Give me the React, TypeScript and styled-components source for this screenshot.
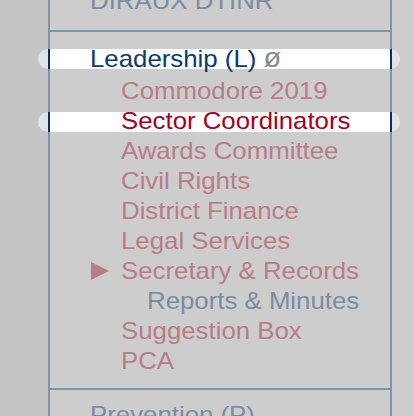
import styled, { createGlobalStyle } from "styled-components";

const GlobalStyle = createGlobalStyle`
    html, body {
        margin: 0;
        padding: 0;
        height: 100%;
        overflow: hidden;
        background: #cdcdcd;
    }
    #root {
        height: 100%;
    }
`;

type Tone = "slate" | "navy" | "red" | "faded";

const tones: Record<Tone, string> = {
    slate: "#7b8ca3",
    navy: "#0a3a6e",
    red: "#a8001f",
    faded: "#b87d87"
};

interface Item {
    label: string;
    tone: Tone;
    indent: number;
    selected?: boolean;
    marker?: boolean;
}

const leadership: Item[] = [
    { label: "Commodore 2019", tone: "faded", indent: 71 },
    { label: "Sector Coordinators", tone: "red", indent: 71, selected: true },
    { label: "Awards Committee", tone: "faded", indent: 71 },
    { label: "Civil Rights", tone: "faded", indent: 71 },
    { label: "District Finance", tone: "faded", indent: 71 },
    { label: "Legal Services", tone: "faded", indent: 71 },
    { label: "Secretary & Records", tone: "faded", indent: 41, marker: true },
    { label: "Reports & Minutes", tone: "slate", indent: 97 },
    { label: "Suggestion Box", tone: "faded", indent: 71 },
    { label: "PCA", tone: "faded", indent: 71 }
];

export default function App() {
    return (
        <>
            <GlobalStyle />
            <Page>
                <Gutter />
                <Panel>
                    <Scroller>
                        <Section $pt={0} $pb={14}>
                            <Row $indent={40} $tone="slate">
                                <Label>DIRAUX DTINR</Label>
                            </Row>
                        </Section>
                        <Section $pt={11} $pb={12} $ruled>
                            <Row $indent={40} $tone="navy" $selected $gap={3}>
                                <Label>
                                    Leadership (L) <Muted>ø</Muted>
                                </Label>
                            </Row>
                            {leadership.map((item) => (
                                <Row key={item.label} $indent={item.indent} $tone={item.tone} $selected={item.selected}>
                                    {item.marker && <Marker />}
                                    <Label>{item.label}</Label>
                                </Row>
                            ))}
                        </Section>
                        <Section $pt={10} $pb={0} $ruled>
                            <Row $indent={40} $tone="slate">
                                <Label>Prevention (P)</Label>
                            </Row>
                        </Section>
                    </Scroller>
                </Panel>
                <Filler />
            </Page>
        </>
    );
}

const Page = styled.div`
    display: flex;
    height: 100%;
    font-family: "Liberation Sans", Arial, Helvetica, sans-serif;
`;

const Gutter = styled.div`
    width: 48px;
    flex: none;
    background: #c5c5c5;
`;

const Panel = styled.div`
    width: 340px;
    flex: none;
    border-left: 2px solid #8193a9;
    border-right: 2px solid #8193a9;
    background: #cdcdcd;
`;

const Filler = styled.div`
    flex: 1;
    background: #cdcdcd;
`;

const Scroller = styled.div`
    margin-top: -14px;
`;

const Section = styled.div<{ $pt: number; $pb: number; $ruled?: boolean }>`
    padding: ${(p) => p.$pt}px 0 ${(p) => p.$pb}px 0;
    border-top: ${(p) => (p.$ruled ? "2px solid #8193a9" : "0")};
`;

const Row = styled.div<{ $indent: number; $tone: Tone; $selected?: boolean; $gap?: number }>`
    position: relative;
    display: flex;
    align-items: center;
    height: 30px;
    margin-bottom: ${(p) => p.$gap ?? 0}px;
    padding-left: ${(p) => p.$indent}px;
    font-size: 24px;
    line-height: 30px;
    color: ${(p) => tones[p.$tone]};
    white-space: nowrap;

    ${(p) =>
        p.$selected &&
        `
        &::before {
            content: "";
            position: absolute;
            top: 6px;
            left: -12px;
            right: -10px;
            height: 20px;
            border-radius: 10px;
            background: #e3e3e3;
        }
        &::after {
            content: "";
            position: absolute;
            top: 6px;
            left: -2px;
            right: -2px;
            height: 20px;
            background: #ffffff;
            border-left: 2px solid #0a2f66;
            border-right: 2px solid #0a2f66;
        }
    `}
`;

const Label = styled.span`
    position: relative;
    z-index: 1;
    display: inline-block;
    transform: scaleX(1.075);
    transform-origin: left center;
`;

const Muted = styled.span`
    font-size: 27px;
    color: #8a8a8a;
`;

const Marker = styled.span`
    position: relative;
    z-index: 1;
    width: 0;
    height: 0;
    margin-right: 12px;
    border-top: 9px solid transparent;
    border-bottom: 9px solid transparent;
    border-left: 18px solid #b87d87;
`;
